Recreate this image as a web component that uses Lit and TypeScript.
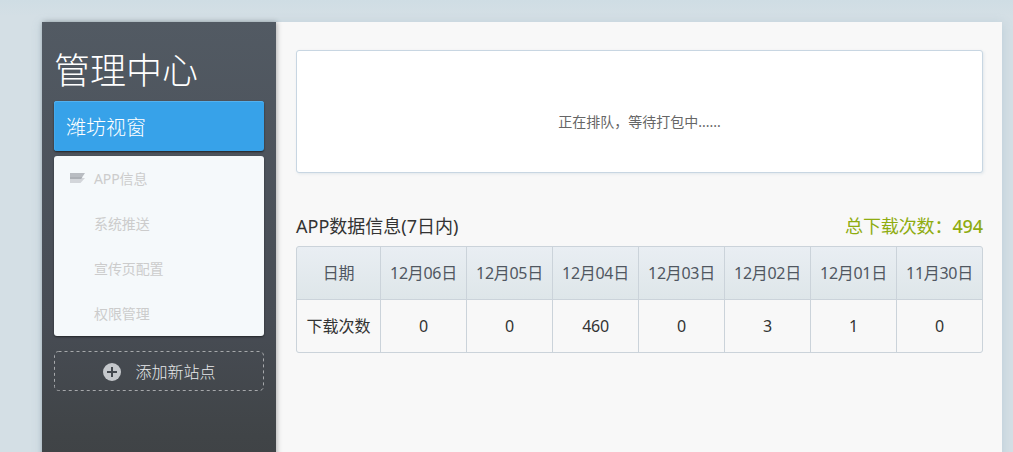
import { LitElement, css, html, svg, nothing } from 'lit'
import { customElement, property } from 'lit/decorators.js'

interface DayStat {
  date: string
  count: number
}

const MENU = ['APP信息', '系统推送', '宣传页配置', '权限管理']

const TOTAL = 494

const STATS: DayStat[] = [
  { date: '12月06日', count: 0 },
  { date: '12月05日', count: 0 },
  { date: '12月04日', count: 460 },
  { date: '12月03日', count: 0 },
  { date: '12月02日', count: 3 },
  { date: '12月01日', count: 1 },
  { date: '11月30日', count: 0 }
]

const layersIcon = svg`
  <path d="M0 5H15L10.500 10H0Z" fill="#d3d6da" />
  <path d="M0 0H15L11 6H0Z" fill="#b9bdc2" />
  <path d="M0 4H12.300L11 6H0Z" fill="#acb0b5" />
`

@customElement('side-menu')
export class SideMenu extends LitElement {
  static styles = css`
    :host {
      display: block;
      box-sizing: border-box;
      width: 234px;
      padding: 26px 12px 0;
      background: linear-gradient(#525a63, #474c54 67%, #404447 92%, #3f4245);
      box-shadow: 1px 0 5px rgba(0, 0, 0, 0.3);
    }
    .title {
      margin: 0;
      height: 53px;
      font-size: 36px;
      font-weight: 300;
      line-height: 45px;
      color: #fff;
    }
    .site {
      height: 50px;
      padding-left: 12px;
      box-sizing: border-box;
      border-radius: 3px;
      background: #37a2e9;
      box-shadow: 0 1px 2px rgba(0, 0, 0, 0.6), inset 0 1px 0 #53b1ef, inset 1px 0 0 #45aaed;
      font-size: 20px;
      font-weight: 300;
      line-height: 53px;
      color: #fff;
    }
    .menu {
      margin: 5px 0 15px;
      padding: 0;
      list-style: none;
      border-radius: 3px;
      background: #f5f9fb;
      box-shadow: 0 1px 2px rgba(0, 0, 0, 0.5);
    }
    .item {
      display: flex;
      align-items: center;
      box-sizing: border-box;
      height: 45px;
      padding: 0 0 2px 16px;
      font-size: 14px;
      letter-spacing: -0.100px;
      color: #ccc;
    }
    .icon {
      width: 24px;
      line-height: 0;
    }
    .add {
      display: flex;
      align-items: center;
      justify-content: center;
      gap: 14px;
      height: 40px;
      padding-left: 1px;
      font-size: 16px;
      font-weight: 300;
      color: #e8eaec;
    }
    .plus {
      margin-top: 2px;
    }
    .frame {
      display: grid;
    }
    .frame > * {
      grid-area: 1 / 1;
    }
  `

  @property() site = ''

  render () {
    return html`
      <h1 class="title">管理中心</h1>
      <div class="site">${this.site}</div>
      <ul class="menu">
        ${MENU.map((label, i) => html`
          <li class="item">
            <span class="icon">
              ${i === 0 ? html`<svg width="15" height="10" viewBox="0 0 15 10">${layersIcon}</svg>` : nothing}
            </span>
            <span>${label}</span>
          </li>
        `)}
      </ul>
      <div class="frame">
        <svg width="210" height="40">
          <rect x="0.5" y="0.5" width="209" height="39" rx="4" fill="none" stroke="#a6a8ab" stroke-dasharray="3 3" />
        </svg>
        <div class="add">
          <svg class="plus" width="18" height="18" viewBox="0 0 18 18">
            <circle cx="9" cy="9" r="9" fill="#c5c8cc" />
            <path d="M9 4V14M4 9H14" stroke="#43484e" stroke-width="2" />
          </svg>
          <span>添加新站点</span>
        </div>
      </div>
    `
  }
}

@customElement('download-table')
export class DownloadTable extends LitElement {
  static styles = css`
    :host {
      display: block;
    }
    .table {
      display: grid;
      grid-template-columns: 83px repeat(7, 85px);
      gap: 1px;
      border: 1px solid #cbd3da;
      border-radius: 3px;
      background: #cbd3da;
      overflow: hidden;
      font-size: 16px;
      letter-spacing: -0.300px;
    }
    .cell {
      display: flex;
      align-items: center;
      justify-content: center;
      box-sizing: border-box;
      height: 52px;
      background: #f8f8f8;
      color: #333;
      white-space: nowrap;
    }
    .head {
      padding-bottom: 2px;
      background: linear-gradient(#e9eef3, #dee6e9);
      color: #505761;
    }
    .label {
      padding-bottom: 2px;
      letter-spacing: 0;
    }
  `

  @property({ attribute: false }) stats: DayStat[] = []

  render () {
    return html`
      <div class="table">
        <div class="cell head">日期</div>
        ${this.stats.map(s => html`<div class="cell head">${s.date}</div>`)}
        <div class="cell label">下载次数</div>
        ${this.stats.map(s => html`<div class="cell">${s.count}</div>`)}
      </div>
    `
  }
}

@customElement('app-root')
export class AppRoot extends LitElement {
  static styles = css`
    :host {
      display: block;
      box-sizing: border-box;
      height: 452px;
      padding: 22px 0 0 42px;
      overflow: hidden;
      background: linear-gradient(#cfdde4, #d4dfe5 16px);
      font-family: "Noto Sans", "Noto Sans CJK SC", sans-serif;
    }
    .page {
      display: flex;
      width: 960px;
      height: 450px;
      background: #f8f8f8;
      box-shadow: 0 2px 10px rgba(110, 150, 175, 0.25);
    }
    .main {
      width: 687px;
      padding: 28px 0 0 20px;
    }
    .status {
      display: flex;
      align-items: center;
      justify-content: center;
      box-sizing: border-box;
      height: 123px;
      padding-top: 18px;
      border: 1px solid #c8d6e2;
      border-radius: 3px;
      background: #fff;
      box-shadow: 1px 1px 3px rgba(100, 140, 170, 0.15);
      font-size: 14px;
      color: #666;
    }
    .heading {
      display: flex;
      align-items: center;
      justify-content: space-between;
      height: 32px;
      margin: 36px 0 5px;
      font-size: 18px;
      color: #333;
    }
    .total {
      letter-spacing: -0.100px;
      color: #8fac10;
    }
    .number {
      font-weight: 500;
    }
  `

  render () {
    return html`
      <div class="page">
        <side-menu site="潍坊视窗"></side-menu>
        <div class="main">
          <div class="status">正在排队，等待打包中......</div>
          <div class="heading">
            <span>APP数据信息(7日内)</span>
            <span class="total">总下载次数：<span class="number">${TOTAL}</span></span>
          </div>
          <download-table .stats=${STATS}></download-table>
        </div>
      </div>
    `
  }
}
